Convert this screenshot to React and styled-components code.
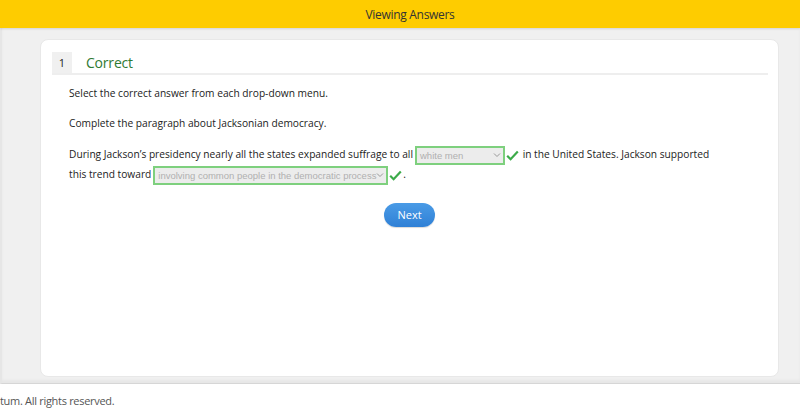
import React from 'react'
import styled, { createGlobalStyle } from 'styled-components'

const GlobalStyle = createGlobalStyle`
  body {
    margin: 0;
    font-family: "Open Sans", "Liberation Sans", sans-serif;
    color: #222;
  }
`

const Page = styled.div`
  height: 410px;
  display: flex;
  flex-direction: column;
  overflow: hidden;
`

const TopBar = styled.div`
  height: 28px;
  flex: none;
  background: #fecc00;
  display: flex;
  align-items: center;
  justify-content: center;
  padding-left: 20px;
  font-size: 12px;
  color: #333;
  letter-spacing: -0.3px;
  box-shadow: 0 1px 2px rgba(0, 0, 0, 0.12);
  position: relative;
  z-index: 1;
`

const Main = styled.div`
  flex: none;
  height: 356px;
  box-sizing: border-box;
  background: #f0f0f0;
  padding: 11px 21px 6px 38px;
  border-left: 2px solid #e6e6e6;
  border-bottom: 1px solid #d6d6d6;
  display: flex;
  box-shadow: inset 0 -3px 3px rgba(0, 0, 0, 0.04);
`

const Card = styled.div`
  flex: 1;
  background: #fff;
  border: 1px solid #e8e8e8;
  border-radius: 8px;
  padding: 12px 10px 12px 11px;
`

const QuestionHead = styled.div`
  display: flex;
  align-items: center;
  height: 21px;
  border-bottom: 2px solid #eeeeee;
`

const Number = styled.div`
  width: 20px;
  height: 21px;
  background: #f0f0f0;
  display: flex;
  align-items: center;
  justify-content: center;
  font-size: 11px;
  color: #222;
`

const Status = styled.div`
  margin-left: 14px;
  font-size: 14px;
  color: #2f7a33;
  letter-spacing: -0.2px;
`

const Body = styled.div`
  padding: 10px 0 0 17px;
  font-size: 10.2px;
`

const Para = styled.p`
  margin: 0 0 13px;
  line-height: 17px;
`

const Passage = styled.p`
  margin: 0;
  line-height: 19px;
  white-space: nowrap;
`

const Select = styled.span`
  display: inline-flex;
  align-items: center;
  justify-content: space-between;
  box-sizing: border-box;
  width: ${p => p.$w}px;
  height: 19px;
  border: 2px solid #7ed07e;
  background: #ececec;
  color: #b0b0b0;
  font-family: "Liberation Sans", Arial, sans-serif;
  font-size: 9.5px;
  padding: 0 2px 0 3px;
  vertical-align: middle;
  white-space: nowrap;
  overflow: hidden;
  margin: 0 1px 0 2px;
`

const Chevron = styled.svg`
  width: 8px;
  height: 6px;
  flex: none;
`

const Check = styled.svg`
  width: 13px;
  height: 11px;
  vertical-align: middle;
  margin-right: 1px;
`

const ButtonRow = styled.div`
  display: flex;
  justify-content: center;
  padding-top: 18px;
  padding-right: 18px;
`

const NextButton = styled.button`
  width: 51px;
  height: 24px;
  border: none;
  border-radius: 12px;
  background: linear-gradient(#4a9be6, #2f80d6);
  color: #fff;
  font-family: "Open Sans", sans-serif;
  font-size: 11px;
  box-shadow: 0 1px 1px rgba(0, 0, 0, 0.15);
`

const Footer = styled.div`
  flex: 1;
  background: #fff;
  display: flex;
  align-items: center;
  font-size: 11px;
  color: #555;
  letter-spacing: -0.3px;
  padding-top: 6px;
`

const Dropdown = ({ w, children }) => (
  <Select $w={w}>
    <span>{children}</span>
    <Chevron viewBox="0 0 8 6">
      <path d="M1 1.5 L4 4.5 L7 1.5" fill="none" stroke="#999" strokeWidth="1" />
    </Chevron>
  </Select>
)

const Tick = () => (
  <Check viewBox="0 0 13 11">
    <path d="M1.2 5.8 L4.6 9.2 L11.8 1.4" fill="none" stroke="#3cab4a" strokeWidth="2.2" />
  </Check>
)

export default function App() {
  return (
    <Page>
      <GlobalStyle />
      <TopBar>Viewing Answers</TopBar>
      <Main>
        <Card>
          <QuestionHead>
            <Number>1</Number>
            <Status>Correct</Status>
          </QuestionHead>
          <Body>
            <Para>Select the correct answer from each drop-down menu.</Para>
            <Para>Complete the paragraph about Jacksonian democracy.</Para>
            <Passage>
              During Jackson’s presidency nearly all the states expanded suffrage to all
              <Dropdown w={90}>white men</Dropdown>
              <Tick /> in the United States. Jackson supported
              <br />
              this trend toward
              <Dropdown w={235}>involving common people in the democratic process</Dropdown>
              <Tick />.
            </Passage>
            <ButtonRow>
              <NextButton>Next</NextButton>
            </ButtonRow>
          </Body>
        </Card>
      </Main>
      <Footer>tum. All rights reserved.</Footer>
    </Page>
  )
}
